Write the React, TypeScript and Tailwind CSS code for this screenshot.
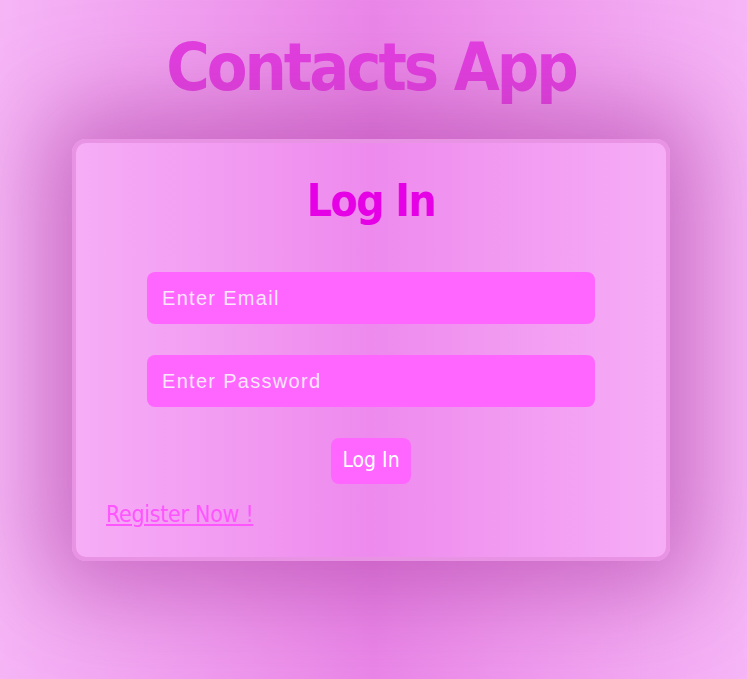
export default function App() {
  return (
    <div className="min-h-screen w-full bg-[linear-gradient(to_right,#f6b6f6,#ea86e8_50%,#f6b6f6)] flex flex-col items-center pt-[26px] pr-[5px] font-['Liberation_Sans_Narrow','DejaVu_Sans_Condensed',sans-serif]">
      <h1 className="text-[66px] leading-[84px] font-bold text-[#e23ee0] tracking-[-3px]">Contacts App</h1>

      <div className="mt-[29px] w-[598px] rounded-[14px] border-4 border-[#e893e4] bg-[linear-gradient(to_right,#f6adf6,#ee8aee_50%,#f6adf6)] shadow-[0_0_90px_30px_rgba(170,60,160,0.55)] px-[30px] pt-[30px] pb-[28px] flex flex-col">
        <h2 className="text-center text-[44px] leading-[56px] font-bold text-[#e600e6] tracking-[-1.5px]">Log In</h2>

        <form className="mt-[43px] flex flex-col items-center">
          <input
            type="email"
            placeholder="Enter Email"
            className="w-[448px] h-[52px] rounded-[8px] bg-[#ff66ff] px-[15px] text-[20px] tracking-[1.3px] text-white placeholder:text-[#fbe6fb] outline-none font-['Liberation_Sans',Arial,sans-serif]"
          />
          <input
            type="password"
            placeholder="Enter Password"
            className="mt-[31px] w-[448px] h-[52px] rounded-[8px] bg-[#ff66ff] px-[15px] text-[20px] tracking-[1.3px] text-white placeholder:text-[#fbe6fb] outline-none font-['Liberation_Sans',Arial,sans-serif]"
          />
          <button type="button" className="mt-[31px] w-[80px] h-[46px] rounded-[8px] bg-[#ff66ff] text-white text-[21px]">
            Log In
          </button>
        </form>

        <div className="mt-[17px]">
          <a href="#" className="text-[23px] leading-[26px] text-[#ff55ff] underline tracking-[-0.3px]">Register Now !</a>
        </div>
      </div>
    </div>
  );
}
